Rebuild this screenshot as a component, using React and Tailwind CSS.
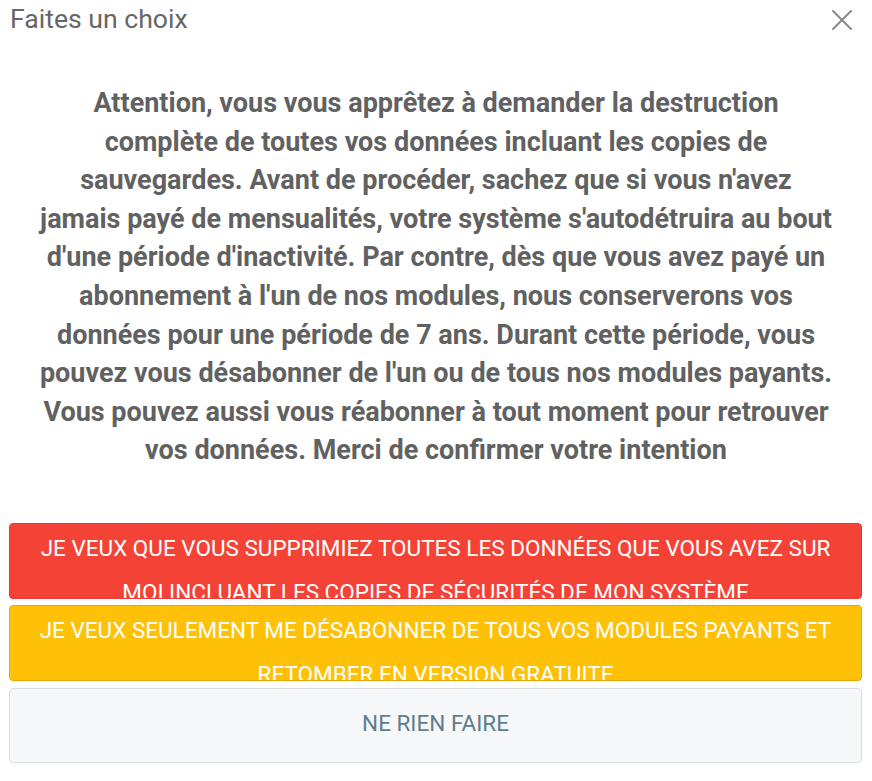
export default function App() {
  const lines = [
    "Attention, vous vous apprêtez à demander la destruction",
    "complète de toutes vos données incluant les copies de",
    "sauvegardes. Avant de procéder, sachez que si vous n'avez",
    "jamais payé de mensualités, votre système s'autodétruira au bout",
    "d'une période d'inactivité. Par contre, dès que vous avez payé un",
    "abonnement à l'un de nos modules, nous conserverons vos",
    "données pour une période de 7 ans. Durant cette période, vous",
    "pouvez vous désabonner de l'un ou de tous nos modules payants.",
    "Vous pouvez aussi vous réabonner à tout moment pour retrouver",
    "vos données. Merci de confirmer votre intention",
  ];
  return (
    <div className="w-[872px] h-[781px] bg-white overflow-hidden" style={{ fontFamily: 'Roboto, "Liberation Sans", sans-serif' }}>
      <div className="flex items-start justify-between pl-[10px] pr-[20px] h-[40px]">
        <div className="text-[26.6px] leading-[40px] text-[#666666] -mt-[1px]">Faites un choix</div>
        <button className="mt-[10px] w-[20px] h-[20px] flex items-center justify-center">
          <svg width="20" height="20" viewBox="0 0 20 20">
            <path d="M1 1 L19 19 M19 1 L1 19" stroke="#8a8a8a" strokeWidth="2" strokeLinecap="round" />
          </svg>
        </button>
      </div>
      <div className="px-[10px] pt-[44px] text-center text-[27px] font-bold leading-[38.6px] text-[#616161]">
        {lines.map((l, i) => (
          <div key={i} className="whitespace-nowrap">{l}</div>
        ))}
      </div>
      <div className="flex flex-col pl-[9px] pr-[10px] mt-[53px]">
        <button className="h-[76px] overflow-hidden rounded-[4px] bg-[#f44336] border border-[#e53935] text-white text-[22.5px] leading-[44px] pt-[2px] px-[10px] text-center">
          <div className="whitespace-nowrap">JE VEUX QUE VOUS SUPPRIMIEZ TOUTES LES DONNÉES QUE VOUS AVEZ SUR</div>
          <div className="whitespace-nowrap">MOI INCLUANT LES COPIES DE SÉCURITÉS DE MON SYSTÈME</div>
        </button>
        <button className="mt-[6px] h-[76px] overflow-hidden rounded-[4px] bg-[#ffc107] border border-[#f0a500] text-white text-[22.5px] leading-[44px] pt-[2px] px-[10px] text-center">
          <div className="whitespace-nowrap">JE VEUX SEULEMENT ME DÉSABONNER DE TOUS VOS MODULES PAYANTS ET</div>
          <div className="whitespace-nowrap">RETOMBER EN VERSION GRATUITE</div>
        </button>
        <button className="mt-[7px] h-[75px] rounded-[4px] bg-[#f5f7f9] border border-[#d7dde2] text-[#5f7d8c] text-[22.5px] text-center flex items-center justify-center pb-[4px]">
          NE RIEN FAIRE
        </button>
      </div>
    </div>
  );
}
